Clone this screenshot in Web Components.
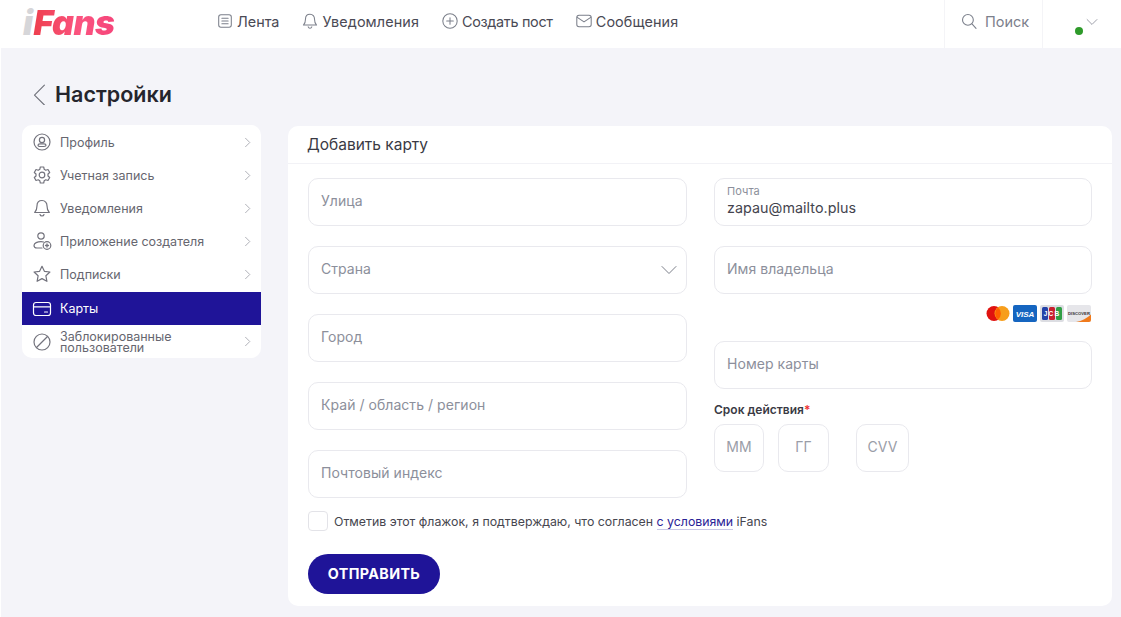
<!DOCTYPE html>
<html lang="ru"><head><meta charset="utf-8"><title>Настройки</title>
<style>
html,body{margin:0;padding:0;height:617px;overflow:hidden}
html{background:#fff}
body{background:#f4f4f9;font-family:Inter,"Noto Sans",sans-serif;color:#3c3c46;margin-left:1px}
</style></head><body>
<x-page></x-page>
<script>
const ICONS={
feed:'<rect x="3" y="3" width="14" height="14" rx="2.5"/><path d="M6.5 7h7M6.5 10h7M6.5 13h7"/>',
bell:'<path d="M10 2.5c-3.2 0-5 2.4-5 5.3 0 3.7-.8 5.300-2.300 6.700h14.600C15.800 13.100 15 11.500 15 7.800c0-2.900-1.800-5.300-5-5.300z"/><path d="M8 16.500c.3 1 1 1.500 2 1.500s1.700-.5 2-1.500"/>',
plus:'<circle cx="10" cy="10" r="8"/><path d="M10 6.300v7.400M6.300 10h7.400"/>',
mail:'<rect x="2" y="3.500" width="16" height="13" rx="2.500"/><path d="M2.500 6l7.500 5 7.500-5"/>',
search:'<circle cx="8.800" cy="8.800" r="6"/><path d="M13.300 13.300l4.500 5"/>',
down:'<path d="M3 6.500l7 7 7-7"/>',
right:'<path d="M7 3.500l6.500 6.500L7 16.500"/>',
back:'<path d="M14 2L5 11l9 9"/>',
profile:'<circle cx="10" cy="10" r="8"/><circle cx="10" cy="8" r="2.600"/><path d="M6 13.300c0-1 1-1.500 2-1.500h4c1 0 2 .5 2 1.500 0 .9-1 1.200-2 1.200H8c-1 0-2-.3-2-1.200z"/>',
gear:'<circle cx="10" cy="10" r="2.800"/><path d="M8.300 2h3.400l.5 2.300 1.500.9 2.300-.7 1.700 3-1.700 1.500v2l1.700 1.500-1.700 3-2.300-.7-1.500.9-.5 2.300H8.300l-.5-2.300-1.500-.9-2.300.7-1.700-3 1.700-1.500v-2L2.300 7.500l1.700-3 2.300.7 1.500-.9z"/>',
creator:'<circle cx="9" cy="5" r="3.200"/><path d="M11.500 11c-1-.3-1.600-.4-2.500-.4-3.500 0-7 1.400-7 3.900 0 1.500 1.200 2.500 3 2.500h5"/><circle cx="15" cy="14.500" r="3.800"/><path d="M13.500 14.500h3M15 13v3" stroke-width="1.300"/>',
star:'<path d="M10 2.300l2.400 5 5.500.7-4 3.800 1 5.500-4.900-2.700-4.900 2.700 1-5.500-4-3.800 5.500-.7z"/>',
card:'<rect x="1.500" y="3.500" width="17" height="13" rx="2.500"/><path d="M1.500 7.800h17M12.500 13h3"/>',
block:'<circle cx="10" cy="10" r="8"/><path d="M4.500 15.500L15.500 4.500"/>'};
function def(name,css,html,extra){
  customElements.define(name,class extends HTMLElement{
    constructor(){super();const s=this.attachShadow({mode:'open'});
      s.innerHTML='<style>'+css+'</style>'+(typeof html==='function'?html(this):html);}
    connectedCallback(){if(extra)extra(this);}
  });
}
def('x-icon',':host{display:inline-flex;flex:none;width:var(--s,20px);height:var(--s,20px);color:var(--c,#73737d)}svg{width:100%;height:100%;fill:none;stroke:currentColor;stroke-width:var(--w,1.200);stroke-linecap:round;stroke-linejoin:round}',
 '<svg viewBox="0 0 20 20"></svg>',el=>{el.shadowRoot.querySelector('svg').innerHTML=ICONS[el.getAttribute('name')]||'';});

def('x-logo',`:host{display:block;width:96px;height:36px;position:relative;font-family:Inter,sans-serif;font-weight:900;font-style:italic}
 .w{position:absolute;left:0;top:-9px;font-size:34px;line-height:48px;white-space:nowrap;letter-spacing:-.6px}
 .i{color:#d6d6d9;margin-right:1px}.f{background:linear-gradient(90deg,#ee3f4e,#fb5480 55%,#f5457a);-webkit-background-clip:text;background-clip:text;color:transparent;padding-right:3px}`,
 '<div class="w"><span class="i">i</span><span class="f">Fans</span></div>');

def('x-nav',':host{display:inline-flex;align-items:center;gap:3px;font-size:14.400px;color:#4a4a55;white-space:nowrap;--c:#7b7f8a;--s:18px;--w:1.150}',
 el=>'<x-icon name="'+el.getAttribute('icon')+'"></x-icon><slot></slot>');

def('x-header',`:host{display:flex;height:48px;background:#fff;align-items:stretch;margin-left:-1px}
 .logo{width:216px;padding:8px 0 0 23px;box-sizing:border-box}
 nav{display:flex;align-items:center;gap:22px;padding-bottom:6px;flex:1}
 .search{width:99px;box-sizing:border-box;border-left:1px solid #f4f4f7;border-right:1px solid #f4f4f7;display:flex;align-items:center;gap:7px;padding:0 0 6px 15px;color:#7c808c;font-size:14.500px;--c:#7c808c;--s:18px}
 .user{width:78px;position:relative;--c:#8a8d98;--s:14px}
 .dot{position:absolute;left:32px;top:27px;width:8px;height:8px;border-radius:50%;background:#2e9a2a}
 .user x-icon{position:absolute;left:42px;top:15px}`,
 `<div class="logo"><x-logo></x-logo></div>
 <nav><x-nav icon="feed">Лента</x-nav><x-nav icon="bell" style="letter-spacing:.1px">Уведомления</x-nav><x-nav icon="plus" style="letter-spacing:-.3px">Создать пост</x-nav><x-nav icon="mail" style="letter-spacing:.1px">Сообщения</x-nav></nav>
 <div class="search"><x-icon name="search"></x-icon>Поиск</div>
 <div class="user"><span class="dot"></span><x-icon name="down"></x-icon></div>`);

def('x-title',`:host{display:flex;align-items:center;gap:4px;height:77px;padding:14px 0 0 28px;box-sizing:border-box;font-size:21.500px;font-weight:600;color:#25252d;--s:22px;--c:#6e7079;--w:1}
 `,el=>'<x-icon name="back"></x-icon><slot></slot>');

def('x-side-item',`:host{display:flex;align-items:center;height:33px;padding:0 7px 3px 10px;box-sizing:border-box;font-size:12.500px;color:#66666f;--c:#73737d}
 :host([active]){background:#1f1498;color:#fff;--c:#fff;padding-bottom:0;height:33px}
 :host([last]){padding-bottom:0}
 .t{margin-left:8px;flex:1;line-height:11px}
 .r{--s:13px;--c:#999ba3}`,
 el=>'<x-icon name="'+el.getAttribute('icon')+'"></x-icon><div class="t"><slot></slot></div>'+(el.hasAttribute('active')?'':'<x-icon class="r" name="right"></x-icon>'));

def('x-side',':host{display:block;width:239px;background:#fff;border-radius:10px;overflow:hidden;padding:2px 0 0;height:233px;box-sizing:border-box;flex:none}',
 '<slot></slot>');

def('x-field',`:host{display:flex;align-items:center;height:48px;box-sizing:border-box;border:1px solid #e9e9ee;border-radius:10px;background:#fff;padding:0 12px 3px;font-size:14px;color:#8c8f9b;position:relative;letter-spacing:.05px}
 .col{display:flex;flex-direction:column;line-height:1}
 .l{font-size:11px;color:#8c8f9b;margin-bottom:4px}
 .v{font-size:14.300px;color:#44444e}
 :host([center]){justify-content:center;padding:0 0 3px}
 x-icon{position:absolute;right:7px;top:13px;--s:20px;--c:#7c7f8a;--w:1}`,
 el=>{const lab=el.getAttribute('label');
  if(lab)return '<div class="col"><span class="l">'+lab+'</span><span class="v"><slot></slot></span></div>';
  return '<slot></slot>'+(el.hasAttribute('select')?'<x-icon name="down"></x-icon>':'');});

def('x-cards',`:host{display:flex;justify-content:flex-end;align-items:flex-start;gap:3px;height:47px;padding:11px 1px 0 0;box-sizing:border-box}
 svg{width:24px;height:17px;display:block}`,
 `<svg viewBox="0 0 24 17"><circle cx="8" cy="8.500" r="7.500" fill="#e0120f"/><circle cx="16" cy="8.500" r="7.500" fill="#f79e1b"/><path d="M12 2.600a7.500 7.500 0 0 1 0 11.800a7.500 7.500 0 0 1 0-11.800z" fill="#ff5f00"/></svg>
 <svg viewBox="0 0 24 17"><rect width="24" height="17" rx="2" fill="#1565c0"/><text x="12" y="11.500" text-anchor="middle" font-family="Liberation Sans" font-weight="700" font-style="italic" font-size="8" fill="#fff">VISA</text></svg>
 <svg viewBox="0 0 24 17"><rect width="24" height="17" rx="2" fill="#dcdde2"/><rect x="2" y="2" width="6" height="13" rx="1.500" fill="#2442a8"/><rect x="9" y="2" width="6" height="13" rx="1.500" fill="#c8202f"/><rect x="16" y="2" width="6" height="13" rx="1.500" fill="#2f9e44"/><text x="12" y="11" text-anchor="middle" font-family="Liberation Sans" font-weight="700" font-size="6.500" fill="#fff" letter-spacing="1.200">JCB</text></svg>
 <svg viewBox="0 0 24 17"><rect width="24" height="17" rx="2" fill="#e6e6ea"/><path d="M24 9.500V15a2 2 0 0 1-2 2H9C15 16 20 13 24 9.500z" fill="#f07a1c"/><text x="12" y="9.500" text-anchor="middle" font-family="Liberation Sans" font-weight="700" font-size="4.200" fill="#333">DISCOVER</text></svg>`);

def('x-button',`:host{display:inline-flex;align-items:center;justify-content:center;width:132px;height:40px;box-sizing:border-box;padding-bottom:2px;border-radius:20px;background:#1f1498;color:#fff;font-weight:700;font-size:14.300px;letter-spacing:.4px}`,'<slot></slot>');

def('x-check',`:host{display:flex;align-items:center;gap:6px;font-size:12.330px;color:#46464f;height:20px}
 .b{width:20px;height:20px;box-sizing:border-box;border:1.500px solid #e3e3e8;border-radius:4px;background:#fff;flex:none}
 a{color:#2a2296;border-bottom:1px solid #c9c8e6;margin-left:0;text-decoration:none;line-height:15px}`,
 '<span class="b"></span><span>Отметив этот флажок, я подтверждаю, что согласен <a>с условиями</a> iFans</span>');

def('x-card-form',`:host{display:block;flex:1;background:#fff;border-radius:10px;height:480px;margin-top:1px;box-sizing:border-box}
 h2{margin:0;height:38px;box-sizing:border-box;border-bottom:1px solid #f2f2f6;padding:0 20px 0 19px;display:flex;align-items:center;font-size:15.500px;font-weight:400;color:#3a3a44}
 .grid{display:grid;grid-template-columns:379px 378px;column-gap:27px;padding:14px 20px 0}
 .col{display:flex;flex-direction:column}
 .gap{gap:20px}
 .lab{font-size:12px;font-weight:600;color:#3a3a44;margin-top:13px;height:22px;line-height:15px}
 .lab b{color:#e33;font-weight:600}
 .exp{display:flex}
 .exp x-field{font-size:14px;color:#9a9da8}
 x-check{margin:13px 20px 0}
 x-button{margin:23px 20px 0}`,
 `<h2>Добавить карту</h2>
 <div class="grid">
  <div class="col gap"><x-field>Улица</x-field><x-field select>Страна</x-field><x-field>Город</x-field><x-field>Край / область / регион</x-field><x-field>Почтовый индекс</x-field></div>
  <div class="col">
   <x-field label="Почта">zapau@mailto.plus</x-field>
   <x-field style="margin-top:20px">Имя владельца</x-field>
   <x-cards></x-cards>
   <x-field>Номер карты</x-field>
   <div class="lab">Срок действия<b>*</b></div>
   <div class="exp"><x-field center style="width:50px">ММ</x-field><x-field center style="width:51px;margin-left:14px">ГГ</x-field><x-field center style="width:53px;margin-left:27px">CVV</x-field></div>
  </div>
 </div>
 <x-check></x-check>
 <x-button>ОТПРАВИТЬ</x-button>`);

def('x-page',`:host{display:block}
 .body{display:flex;gap:27px;padding:0 9px 0 21px}`,
 `<x-header></x-header><x-title>Настройки</x-title>
 <div class="body"><x-side>
  <x-side-item icon="profile">Профиль</x-side-item>
  <x-side-item icon="gear">Учетная запись</x-side-item>
  <x-side-item icon="bell">Уведомления</x-side-item>
  <x-side-item icon="creator">Приложение создателя</x-side-item>
  <x-side-item icon="star">Подписки</x-side-item>
  <x-side-item icon="card" active>Карты</x-side-item>
  <x-side-item icon="block" last>Заблокированные<br>пользователи</x-side-item>
 </x-side><x-card-form></x-card-form></div>`);
</script>
</body></html>
